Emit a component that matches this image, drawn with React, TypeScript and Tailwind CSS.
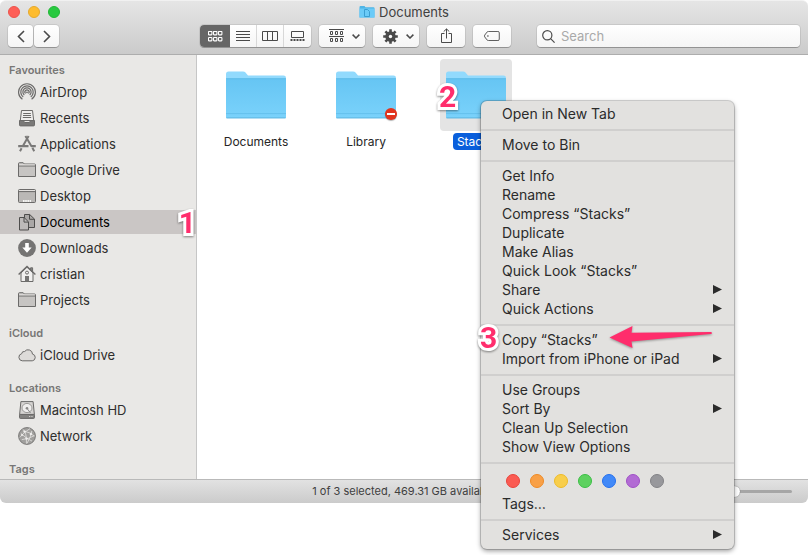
import type { ReactNode } from "react";

const FONT = "font-['Inter','Liberation_Sans',sans-serif]";

function Glyph({ children, size = 18 }: { children: ReactNode; size?: number }) {
  return (
    <svg
      width={size}
      height={size}
      viewBox="0 0 18 18"
      fill="none"
      stroke="#6b6a69"
      strokeWidth="1"
      className="shrink-0"
      aria-hidden="true"
    >
      {children}
    </svg>
  );
}

const AirDropIcon = () => (
  <Glyph>
    <g strokeWidth="1.2">
      <path d="M4.4 16.2A8.4 8.4 0 1 1 13.6 16.2" />
      <path d="M5.2 14A6.2 6.2 0 1 1 12.8 14" />
      <path d="M6.3 12.1A4.1 4.1 0 1 1 11.7 12.1" />
      <path d="M7.5 10.5A2.1 2.1 0 1 1 10.5 10.5" />
    </g>
    <circle cx="9" cy="9.3" r="0.9" fill="#6b6a69" stroke="none" />
  </Glyph>
);

const RecentsIcon = () => (
  <Glyph>
    <path d="M3.5 1.5h11l1.2 10H2.3z" fill="#efeeed" />
    <path d="M5.2 4.5h7.6M5 6.5h8M4.8 8.5h8.4" />
    <path d="M1.5 11.5h4l1 2h5l1-2h4v4.4q0 1-1 1H2.5q-1 0-1-1z" fill="#7a7978" />
  </Glyph>
);

const ApplicationsIcon = () => (
  <Glyph>
    <g stroke="#7a7978">
      <path d="M10.6 1 4.6 11.4M7.4 1l6.2 10.4" strokeWidth="2" />
      <path d="M.2 11.2h10.3M13 11.2h4.8" strokeWidth="2.2" />
      <path d="M3.6 13.2 2 16.2M14.4 12.8l1.8 3.4" strokeWidth="2" />
    </g>
  </Glyph>
);

const FolderIcon = () => (
  <Glyph>
    <path d="M.5 15.5V2.6q0-.9.9-.9h3.8l1.2 1.3h10.2q.9 0 .9.9v11.6z" fill="#c6c4c2" />
    <path d="M1 5h16" />
    <path d="M1.2 3.8h15.6" stroke="#e4e2e0" />
  </Glyph>
);

const DesktopIcon = () => (
  <Glyph>
    <rect x="0.5" y="2.5" width="17" height="13" rx="1" fill="#bab8b6" />
    <path d="M1 3.5h16" stroke="#e4e2e0" />
    <path d="M1 4.6h16" />
    <path d="M5 14h8" stroke="#f5f5f4" strokeWidth="2" strokeDasharray="1.6 .6" />
  </Glyph>
);

const DocumentsIcon = () => (
  <Glyph>
    <path d="M6.5 1.5h5.2l4.8 4.6v8.4h-10z" fill="#aaa7a6" stroke="#4e4d4c" />
    <path d="M11.5 1.5v4.8h5" stroke="#4e4d4c" />
    <path d="M1.5 4.5h4.6l4.4 4.4v8.1h-9z" fill="#bdbab9" stroke="#4e4d4c" />
    <path d="M6 4.5v4.6h4.5" stroke="#4e4d4c" />
  </Glyph>
);

const DownloadsIcon = () => (
  <Glyph>
    <circle cx="9" cy="9" r="8.9" fill="#757473" stroke="none" />
    <path d="M7.2 4h3.6v4.6h2.9L9 13.8 4.3 8.6h2.9z" fill="#fff" stroke="none" />
  </Glyph>
);

const HomeIcon = () => (
  <Glyph>
    <path d="M3 8v8.5h12V8L9 2.2z" fill="#f0efee" />
    <path d="M12.6 5V2.8h2v4" fill="#8a8988" />
    <path d="M.6 9.4 9 1.4l8.4 8" strokeWidth="1.4" />
    <circle cx="9" cy="7.6" r="1.5" />
    <path d="M7 11h4v5.5H7z" fill="#757473" stroke="none" />
  </Glyph>
);

const CloudIcon = () => (
  <Glyph>
    <path
      d="M4.2 14.8a3.6 3.6 0 0 1-.5-7.1 2.5 2.5 0 0 1 2.9-2.2 4.4 4.4 0 0 1 7.9 2.6 3.4 3.4 0 0 1-.2 6.7z"
      fill="#dddbd9"
    />
  </Glyph>
);

const DiskIcon = () => (
  <Glyph>
    <path d="M2.9.6h12.2l1.3 13H1.6z" fill="#d6d4d2" />
    <ellipse cx="9" cy="7" rx="5" ry="4.6" fill="#efeeed" stroke="#9b9a98" />
    <circle cx="9" cy="7.3" r="1.3" fill="#8a8988" stroke="none" />
    <path d="m9 7.4 3.5 4.6" stroke="#8a8988" />
    <rect x="1.5" y="13.4" width="15" height="4" rx="0.8" fill="#838280" />
    <path d="M11 15.5h4" stroke="#d0cecc" strokeDasharray="1 .7" />
  </Glyph>
);

const NetworkIcon = () => (
  <Glyph>
    <circle cx="9" cy="9" r="8.4" fill="#a09f9d" stroke="#7a7978" />
    <g stroke="#dddbd9" strokeWidth="0.9">
      <path d="M5 2.4Q9 6 8.4 16.6M12 1.6Q6 5 1.8 10.4M6.3 4.2q6 1 10 5M3 6.5q5 5 11 7.6M13.8 4Q13 10 9 16.4M3.8 12.6q7-.5 12.6-4" />
    </g>
    <g fill="#efeeed" stroke="none">
      <circle cx="6.6" cy="4.6" r="1.2" />
      <circle cx="12.9" cy="7" r="1.2" />
      <circle cx="8.6" cy="11.6" r="1.2" />
      <circle cx="4" cy="8" r="1" />
    </g>
  </Glyph>
);

type Place = { name: string; icon: ReactNode; selected?: boolean };

const SECTIONS: { title: string; items: Place[] }[] = [
  {
    title: "Favourites",
    items: [
      { name: "AirDrop", icon: <AirDropIcon /> },
      { name: "Recents", icon: <RecentsIcon /> },
      { name: "Applications", icon: <ApplicationsIcon /> },
      { name: "Google Drive", icon: <FolderIcon /> },
      { name: "Desktop", icon: <DesktopIcon /> },
      { name: "Documents", icon: <DocumentsIcon />, selected: true },
      { name: "Downloads", icon: <DownloadsIcon /> },
      { name: "cristian", icon: <HomeIcon /> },
      { name: "Projects", icon: <FolderIcon /> },
    ],
  },
  { title: "iCloud", items: [{ name: "iCloud Drive", icon: <CloudIcon /> }] },
  {
    title: "Locations",
    items: [
      { name: "Macintosh HD", icon: <DiskIcon /> },
      { name: "Network", icon: <NetworkIcon /> },
    ],
  },
  { title: "Tags", items: [] },
];

function StepNumber({ n, className }: { n: number; className: string }) {
  return (
    <span
      className={`pointer-events-none absolute z-20 font-['Roboto','Liberation_Sans',sans-serif] text-[30px] leading-[30px] font-bold text-[#ff2d6c] [-webkit-text-stroke:6px_white] [paint-order:stroke_fill] drop-shadow-[0_1px_1px_rgba(0,0,0,0.45)] ${className}`}
    >
      {n}
    </span>
  );
}

function Sidebar() {
  return (
    <nav
      aria-label="Places"
      className="flex w-[197px] shrink-0 flex-col gap-[11px] border-r border-[#c6c6c6] bg-[#e9e8e6] pt-[5px]"
    >
      {SECTIONS.map((section) => (
        <section key={section.title}>
          <h2 className="h-5 pl-[9px] text-[11px] leading-5 font-semibold text-[#777675]">{section.title}</h2>
          <ul className="flex flex-col gap-0.5">
            {section.items.map((item) => (
              <li key={item.name} className="relative">
                <a
                  href="#"
                  className={`flex h-6 items-center gap-1 pl-[18px] text-[13px] leading-6 ${
                    item.selected ? "bg-[#cac6c5] text-black" : "text-[#2f2e2d]"
                  }`}
                >
                  {item.icon}
                  {item.name}
                </a>
                {item.selected && <StepNumber n={1} className="-top-0.5 right-0" />}
              </li>
            ))}
          </ul>
        </section>
      ))}
    </nav>
  );
}

const BUTTON =
  "flex h-[22px] items-center justify-center rounded bg-linear-to-b from-white to-[#f5f5f5] shadow-[0_0_0_1px_rgba(0,0,0,0.08),0_1px_0_rgba(0,0,0,0.22)]";

const Chevron = () => (
  <svg width="8" height="5" viewBox="0 0 8 5" fill="none" stroke="#4a4a4a" strokeWidth="1.5" aria-hidden="true">
    <path d="m.6.6 3.4 3.4L7.4.6" />
  </svg>
);

function GridMark() {
  return (
    <svg width="15" height="11" viewBox="0 0 15 11" fill="none" stroke="#fff" aria-hidden="true">
      {[0.5, 5.5, 10.5].map((x) =>
        [0.5, 6.5].map((y) => <rect key={`${x}-${y}`} x={x} y={y} width="3.4" height="3.4" rx="0.6" strokeWidth="1.1" />),
      )}
    </svg>
  );
}

function Gear() {
  return (
    <svg width="15" height="15" viewBox="0 0 15 15" aria-hidden="true">
      <g stroke="#4a4a4a" strokeWidth="2.6">
        <path d="M7.5.2v14.6M.2 7.5h14.6M2.4 2.4l10.2 10.2M12.6 2.4 2.4 12.6" />
      </g>
      <circle cx="7.5" cy="7.5" r="3.7" fill="none" stroke="#4a4a4a" strokeWidth="3" />
      <circle cx="7.5" cy="7.5" r="1.7" fill="#f9f9f9" />
    </svg>
  );
}

function Toolbar() {
  return (
    <header className="flex h-[55px] flex-col rounded-t-md border-t border-b border-t-[#f1f1f1] border-b-[#adadad] bg-linear-to-b from-[#e5e5e5] to-[#cbcbcb]">
      <div className="grid h-[22px] grid-cols-[1fr_auto_1fr] items-center">
        <div className="flex gap-2 pl-2">
          <button aria-label="Close" className="size-3 rounded-full border border-[#ec544c] bg-[#fe5f57]" />
          <button aria-label="Minimise" className="size-3 rounded-full border border-[#e6a92c] bg-[#febc2e]" />
          <button aria-label="Zoom" className="size-3 rounded-full border border-[#20b835] bg-[#28c940]" />
        </div>
        <h1 className="flex items-center gap-1 text-[13px] leading-5 text-[#404040]">
          <svg width="16" height="14" viewBox="0 0 16 14" aria-hidden="true">
            <path d="M.5 2Q.5 1 1.5 1h4l1 1.200h8q1 0 1 1v9.300H.5z" fill="#4fb5e6" />
            <path d="M.5 3.500h15v9H.5z" fill="#6bcbf8" />
            <path d="M5.500 4.500h3l2 2v5h-5z" fill="none" stroke="#3b9fd2" />
          </svg>
          Documents
        </h1>
      </div>
      <div className="flex items-center gap-2 pt-0.5 pr-2">
        <div className="flex w-[192px] gap-px pl-2">
          <button aria-label="Back" className={`${BUTTON} w-[25px]`}>
            <svg width="8" height="13" viewBox="0 0 8 13" fill="none" stroke="#4a4a4a" strokeWidth="1.6">
              <path d="m7 1-5.500 5.500L7 12" />
            </svg>
          </button>
          <button aria-label="Forward" className={`${BUTTON} w-[25px]`}>
            <svg width="8" height="13" viewBox="0 0 8 13" fill="none" stroke="#4a4a4a" strokeWidth="1.6">
              <path d="m1 1 5.500 5.500L1 12" />
            </svg>
          </button>
        </div>
        <div className={`${BUTTON} w-[111px] overflow-hidden`}>
          <button aria-label="Icons" className="flex h-full w-[30px] items-center justify-center bg-[#666]">
            <GridMark />
          </button>
          <button aria-label="List" className="flex h-full w-[27px] items-center justify-center border-r border-[#d8d8d8]">
            <svg width="14" height="10" viewBox="0 0 14 10" stroke="#4a4a4a">
              <path d="M0 .5h14M0 3.500h14M0 6.500h14M0 9.500h14" />
            </svg>
          </button>
          <button aria-label="Columns" className="flex h-full w-[27px] items-center justify-center border-r border-[#d8d8d8]">
            <svg width="16" height="10" viewBox="0 0 16 10" fill="none" stroke="#4a4a4a">
              <path d="M.5.5h15v9H.5zM5.500.5v9M10.500.5v9" />
            </svg>
          </button>
          <button aria-label="Gallery" className="flex h-full w-[27px] items-center justify-center">
            <svg width="15" height="10" viewBox="0 0 15 10" fill="none" stroke="#4a4a4a">
              <path d="M1.500.5h12v6h-12z" />
              <path d="M.5 9h14" strokeWidth="2" strokeDasharray="2 1" />
            </svg>
          </button>
        </div>
        <button aria-label="Group" className={`${BUTTON} w-[46px] gap-2 pl-1`}>
          <svg width="15" height="14" viewBox="0 0 15 14" fill="none" stroke="#4a4a4a">
            <path d="M0 .5h15M0 7.500h15" />
            <path d="M1.500 2.500h2v3h-2zM6.500 2.500h2v3h-2zM11.500 2.500h2v3h-2zM1.500 9.500h2v3h-2zM6.500 9.500h2v3h-2zM11.500 9.500h2v3h-2z" />
          </svg>
          <Chevron />
        </button>
        <button aria-label="Actions" className={`${BUTTON} w-[46px] gap-2 pl-1`}>
          <Gear />
          <Chevron />
        </button>
        <button aria-label="Share" className={`${BUTTON} w-[38px]`}>
          <svg width="13" height="16" viewBox="0 0 13 16" fill="none" stroke="#4a4a4a">
            <path d="M4.500 5.500h-3v9h10v-9h-3M6.500 10.500V1M3.700 3.600 6.500.9l2.800 2.700" />
          </svg>
        </button>
        <button aria-label="Edit Tags" className={`${BUTTON} w-[38px]`}>
          <svg width="18" height="10" viewBox="0 0 18 11" fill="none" stroke="#4a4a4a">
            <path d="M5 .5h10.500q1.500 0 1.500 1.500v7q0 1.500-1.500 1.500H5Q4.200 10.500 3.500 9.800L1 6.500q-.6-1 0-2L3.500 1.200Q4.200.5 5 .5z" />
            <circle cx="4.500" cy="5.500" r="0.9" fill="#4a4a4a" stroke="none" />
          </svg>
        </button>
        <div className={`${BUTTON} ml-[18px] min-w-0 flex-1 gap-1.5 pl-[5px]`}>
          <svg width="13" height="13" viewBox="0 0 13 13" fill="none" stroke="#4a4a4a" strokeWidth="1.2" className="shrink-0">
            <circle cx="5.300" cy="5.300" r="4.600" />
            <path d="m8.600 8.600 4 4" />
          </svg>
          <input
            type="search"
            aria-label="Search"
            placeholder="Search"
            className="min-w-0 flex-1 bg-transparent text-[13px] leading-5 outline-none placeholder:text-[#a9a9a9]"
          />
        </div>
      </div>
    </header>
  );
}

function BigFolder({ id }: { id: string }) {
  return (
    <svg width="60" height="48" viewBox="0 0 60 48" aria-hidden="true">
      <defs>
        <linearGradient id={id} x1="0" y1="0" x2="0" y2="1">
          <stop offset="0" stopColor="#66c5f3" />
          <stop offset="1" stopColor="#7ad2fb" />
        </linearGradient>
      </defs>
      <path d="M0 46.500V3Q0 .5 2.500.5H17q1.600 0 2.500 1.100L22 4.600h35.500Q60 4.600 60 7v39.500z" fill="#92dafd" />
      <path d="M0 8.600q0-1.100 1.100-1.100h57.800q1.100 0 1.100 1.100V46.500q0 .8-.8.8H.8q-.8 0-.8-.8z" fill={`url(#${id})`} />
      <path d="M0 7.700h60" stroke="#55b4e3" strokeWidth="0.700" />
      <path d="M0 42.600h60" stroke="#5fbce8" strokeWidth="0.800" />
      <path d="M.5 46.900h59" stroke="#57aed9" strokeWidth="0.800" />
    </svg>
  );
}

const FOLDERS = [
  { name: "Documents", locked: false, selected: false },
  { name: "Library", locked: true, selected: false },
  { name: "Stacks", locked: false, selected: true },
];

function Files() {
  return (
    <main className="flex-1 bg-white pt-1 pl-1">
      <ul className="flex flex-wrap">
        {FOLDERS.map((f) => (
          <li key={f.name} className="flex w-[110px] flex-col items-center gap-0.5">
            <div
              className={`relative flex size-[72px] items-center justify-center rounded ${f.selected ? "bg-[#e4e4e4]" : ""}`}
            >
              <BigFolder id={`fill-${f.name}`} />
              {f.locked && (
                <span className="absolute right-[5px] bottom-[11px] flex size-3 items-center justify-center rounded-full bg-[#e2341d] shadow-[0_1px_1px_rgba(0,0,0,0.3)]">
                  <span className="h-0.5 w-2 bg-white" />
                </span>
              )}
              {f.selected && <StepNumber n={2} className="top-[23px] -left-px" />}
            </div>
            <span
              className={`rounded px-1 text-[12px] leading-[17px] ${f.selected ? "bg-[#0a5fdc] text-white" : "text-[#262626]"}`}
            >
              {f.name}
            </span>
          </li>
        ))}
      </ul>
    </main>
  );
}

function StatusBar() {
  return (
    <footer className="grid h-6 grid-cols-[1fr_auto_1fr] items-center rounded-b-md border-t border-[#b9b9b9] bg-linear-to-b from-[#e2e2e2] to-[#cbcbcb] text-[11px] text-[#404040]">
      <span />
      <p>1 of 3 selected, 469.31 GB available</p>
      <input
        type="range"
        aria-label="Icon size"
        defaultValue={34}
        className="mr-4 h-3 w-[90px] appearance-none justify-self-end bg-transparent [&::-webkit-slider-runnable-track]:h-[3px] [&::-webkit-slider-runnable-track]:rounded-full [&::-webkit-slider-runnable-track]:bg-[#a6a6a6] [&::-webkit-slider-thumb]:-mt-1 [&::-webkit-slider-thumb]:size-[11px] [&::-webkit-slider-thumb]:appearance-none [&::-webkit-slider-thumb]:rounded-full [&::-webkit-slider-thumb]:bg-white [&::-webkit-slider-thumb]:shadow-[0_0_1px_rgba(0,0,0,0.6)]"
      />
    </footer>
  );
}

const TAG_COLOURS = [
  { name: "Red", tone: "bg-[#fb5b52] border-[#e8443c]" },
  { name: "Orange", tone: "bg-[#f8a047] border-[#ef8a24]" },
  { name: "Yellow", tone: "bg-[#f8ce4c] border-[#eebb27]" },
  { name: "Green", tone: "bg-[#5ed160] border-[#3abf44]" },
  { name: "Blue", tone: "bg-[#4189f8] border-[#2470ee]" },
  { name: "Purple", tone: "bg-[#b26bd4] border-[#9f50c6]" },
  { name: "Grey", tone: "bg-[#98989c] border-[#828286]" },
];

function MenuItem({ label, submenu = false }: { label: string; submenu?: boolean }) {
  return (
    <button
      role="menuitem"
      className="flex h-[19px] w-full items-center justify-between pr-3 pb-0.5 pl-[21px] text-left leading-[17px]"
    >
      {label}
      {submenu && (
        <svg width="9" height="9" viewBox="0 0 9 9" aria-hidden="true">
          <path d="M0 0l9 4.500L0 9z" fill="#2b2b2b" />
        </svg>
      )}
    </button>
  );
}

const Divider = () => <hr className="my-[5px] h-0.5 border-0 bg-[#d0cfce]" />;

function ContextMenu() {
  return (
    <div
      role="menu"
      className="absolute top-[101px] left-[481px] z-10 w-[253px] rounded-md bg-[#e2e1df] py-1 text-[14px] text-[#2b2b2b] shadow-[0_0_0_1px_rgba(0,0,0,0.16),0_2px_5px_rgba(0,0,0,0.4)]"
    >
      <MenuItem label="Open in New Tab" />
      <Divider />
      <MenuItem label="Move to Bin" />
      <Divider />
      <MenuItem label="Get Info" />
      <MenuItem label="Rename" />
      <MenuItem label="Compress “Stacks”" />
      <MenuItem label="Duplicate" />
      <MenuItem label="Make Alias" />
      <MenuItem label="Quick Look “Stacks”" />
      <MenuItem label="Share" submenu />
      <MenuItem label="Quick Actions" submenu />
      <Divider />
      <div className="relative">
        <MenuItem label="Copy “Stacks”" />
        <StepNumber n={3} className="-top-2 -left-px" />
        <svg
          width="104"
          height="26"
          viewBox="0 0 104 26"
          className="pointer-events-none absolute -top-2 right-[21px] drop-shadow-[0_1px_1px_rgba(0,0,0,0.35)]"
          aria-hidden="true"
        >
          <path d="M.5 14.500 23.500 3l-1 6.700 79-.6q1.500 0 1.500 1t-1.500 1L22.500 18.500l1 6.500z" fill="#ff2d6c" />
        </svg>
      </div>
      <MenuItem label="Import from iPhone or iPad" submenu />
      <Divider />
      <MenuItem label="Use Groups" />
      <MenuItem label="Sort By" submenu />
      <MenuItem label="Clean Up Selection" />
      <MenuItem label="Show View Options" />
      <Divider />
      <div className="flex gap-2.5 pt-[5px] pb-[7px] pl-[25px]">
        {TAG_COLOURS.map((tag) => (
          <button key={tag.name} aria-label={tag.name} className={`size-3.5 rounded-full border ${tag.tone}`} />
        ))}
      </div>
      <MenuItem label="Tags…" />
      <Divider />
      <MenuItem label="Services" submenu />
    </div>
  );
}

export default function App() {
  return (
    <div className={`relative min-h-screen bg-white ${FONT}`}>
      <div className="flex flex-col">
        <Toolbar />
        <div className="flex">
          <Sidebar />
          <Files />
        </div>
        <StatusBar />
      </div>
      <ContextMenu />
    </div>
  );
}
